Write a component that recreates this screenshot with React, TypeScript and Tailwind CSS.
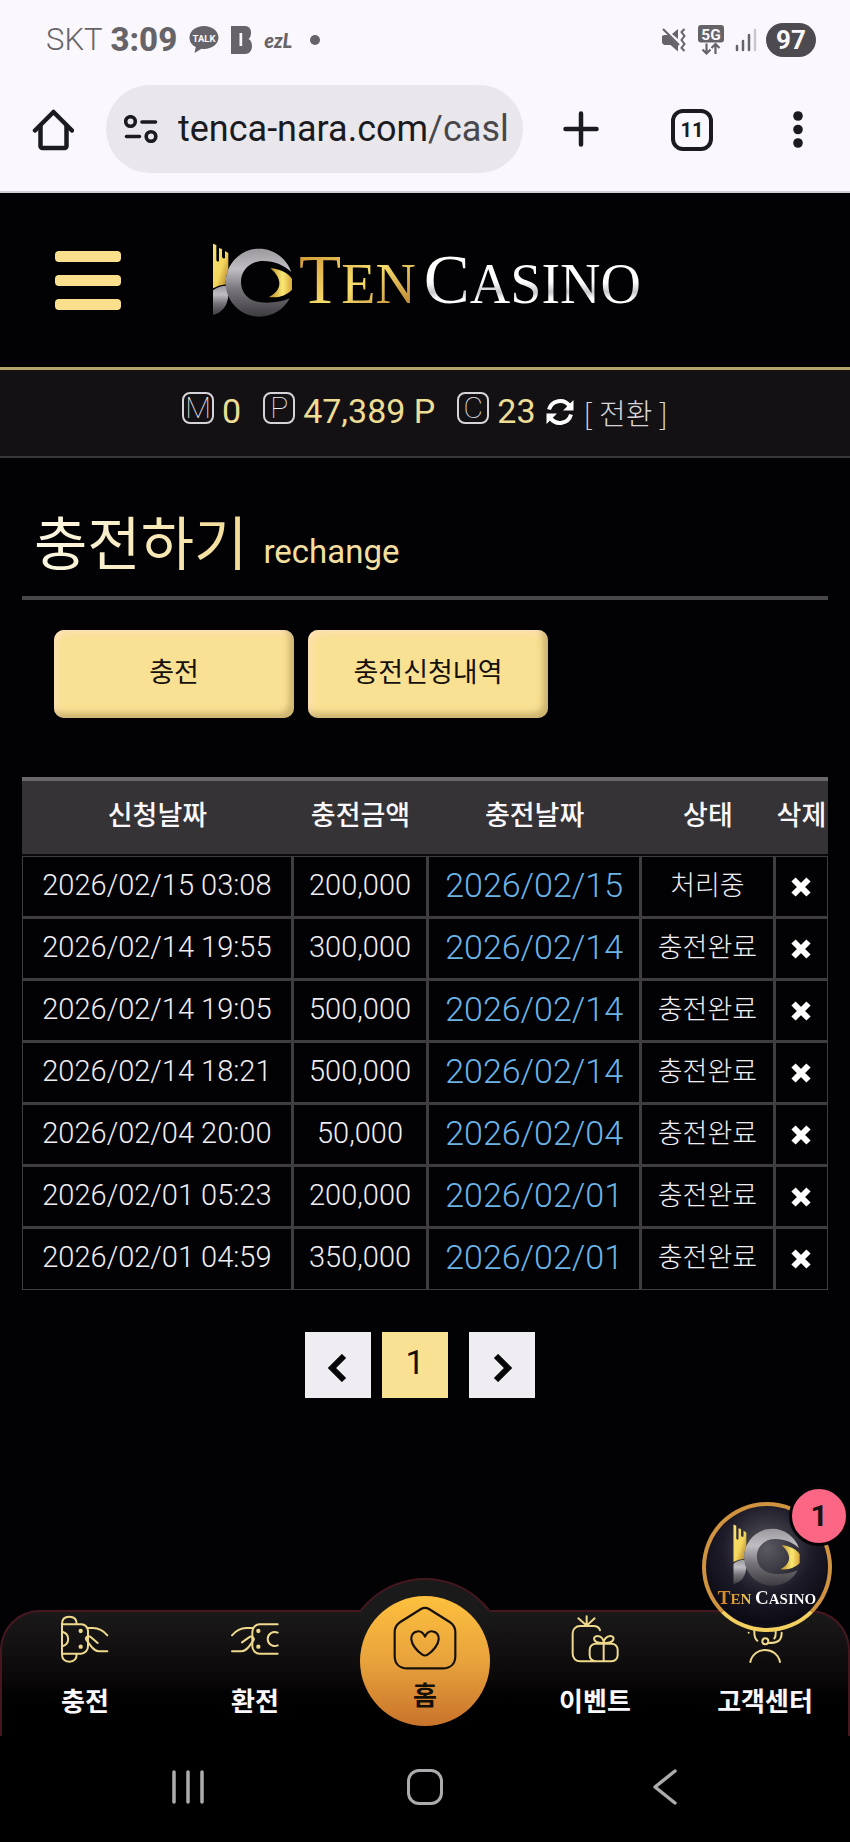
import React, { useId } from "react";

const SANS = "font-['Roboto','Noto_Sans_CJK_KR',sans-serif]";
const KR = "font-['Noto_Sans_CJK_KR',sans-serif]";

type Row = { requested: string; amount: string; charged: string; status: string };

const rows: Row[] = [
  { requested: "2026/02/15 03:08", amount: "200,000", charged: "2026/02/15", status: "처리중" },
  { requested: "2026/02/14 19:55", amount: "300,000", charged: "2026/02/14", status: "충전완료" },
  { requested: "2026/02/14 19:05", amount: "500,000", charged: "2026/02/14", status: "충전완료" },
  { requested: "2026/02/14 18:21", amount: "500,000", charged: "2026/02/14", status: "충전완료" },
  { requested: "2026/02/04 20:00", amount: "50,000", charged: "2026/02/04", status: "충전완료" },
  { requested: "2026/02/01 05:23", amount: "200,000", charged: "2026/02/01", status: "충전완료" },
  { requested: "2026/02/01 04:59", amount: "350,000", charged: "2026/02/01", status: "충전완료" },
];

function StatusBar() {
  return (
    <div className="flex h-20 items-center justify-between pl-11.5 pr-8.5 text-[#666468]">
      <div className="flex items-center">
        <span className="text-[31px] font-light leading-8">SKT</span>
        <span className="ml-2 text-[33px] font-extrabold leading-8">3:09</span>
        <div className="ml-3 flex items-center gap-3">
          <svg viewBox="0 0 30 28" className="h-7 w-7.5">
            <path
              fill="#666468"
              d="M15 0C6.900 0 .5 5 .5 11.500c0 4.200 2.500 7.700 6.300 9.600L5.500 27l7-4.200c.8.1 1.600.2 2.500.2 8 0 14.500-5 14.500-11.500S23 0 15 0z"
            />
            <text x="15" y="15.500" textAnchor="middle" fontSize="9.500" fontWeight="bold" fill="#faf8fd">
              TALK
            </text>
          </svg>
          <svg viewBox="0 0 21 28" className="h-7 w-5.25">
            <path fill="#666468" d="M0 0h14c4 0 6 3 6 6.500 0 3-.8 5.500-2.500 6.500 2.300 1 3.500 4 3.500 7 0 4.500-2.500 8-7 8H0z" />
            <path fill="#faf8fd" d="M8.500 7h2.700v13H8.500z" />
          </svg>
          <span className="font-['Lato',sans-serif] text-[20px] font-black italic leading-6">ezL</span>
        </div>
        <span className="ml-4.5 h-2.5 w-2.5 rounded-full bg-[#666468]" />
      </div>
      <div className="flex items-center">
        <svg viewBox="0 0 24 24" className="h-6 w-6" fill="none">
          <path fill="#666468" d="M0 8l2-1h4l10 10v6.500L8.500 17H2l-2-2zM10 6l6-5v10z" />
          <path stroke="#666468" strokeWidth="2.200" d="M1 1l16 16" />
          <path stroke="#666468" strokeWidth="2" d="M22.500 1l-3 3 3 4-3 4 3 4-3 4 3 3" />
        </svg>
        <svg viewBox="0 0 26 30" className="ml-3 h-7.5 w-6.5" fill="none">
          <rect width="26" height="17.500" rx="3" fill="#666468" />
          <text x="13" y="14.500" textAnchor="middle" fontSize="15.500" fontWeight="bold" fill="#faf8fd">
            5G
          </text>
          <path stroke="#666468" strokeWidth="2.200" d="M8.500 18.500v10M4.500 24.500l4 4 4-4M17.500 29v-10M13.500 23l4-4 4 4" />
        </svg>
        <svg viewBox="0 0 24 24" className="ml-2.5 h-6 w-6">
          <path stroke="#666468" strokeWidth="2.500" strokeLinecap="round" d="M3 18v4M9 13v9M15 7v15" />
          <path stroke="#c9c7cc" strokeWidth="2.500" strokeLinecap="round" d="M21 2v20" />
        </svg>
        <span className="ml-2 flex h-8.5 w-12.5 items-center justify-center rounded-full bg-[#4d4b4f] text-[26px] font-bold leading-8 text-[#faf8fd]">
          97
        </span>
      </div>
    </div>
  );
}

function BrowserBar() {
  return (
    <div className="flex h-27.75 items-start pl-8 pr-10.5 pt-1.25 text-[#1b1b1f]">
      <button type="button" aria-label="Home" className="mt-6 h-10.5 w-10.5 shrink-0">
        <svg viewBox="0 0 42 42" fill="none" stroke="currentColor" strokeWidth="4.500" strokeLinecap="round" strokeLinejoin="round">
          <path d="M3 21.500L21.500 3 40 21.500" />
          <path d="M8.500 17v20a2 2 0 0 0 2 2h22a2 2 0 0 0 2-2V17" />
        </svg>
      </button>
      <button
        type="button"
        aria-label="Address"
        className="ml-8 flex h-22 min-w-0 flex-1 items-center rounded-full bg-[#e9e7eb] pl-4.5 pr-3"
      >
        <svg viewBox="0 0 34 28" className="h-7 w-8.5 shrink-0" fill="none" stroke="currentColor" strokeWidth="3.600" strokeLinecap="round">
          <circle cx="6.500" cy="6.500" r="4.800" />
          <path d="M18 7h13.500M2.500 21.500h13" />
          <circle cx="27" cy="21.500" r="4.800" />
        </svg>
        <span className="ml-5 min-w-0 flex-1 overflow-hidden whitespace-nowrap text-left text-[36px] leading-11">
          tenca-nara.com<span className="text-[#48474b]">/casl</span>
        </span>
      </button>
      <button type="button" aria-label="New tab" className="ml-10 mt-6.5 h-9 w-9 shrink-0">
        <svg viewBox="0 0 36 36" stroke="currentColor" strokeWidth="4.500" strokeLinecap="round">
          <path d="M18 2.500v31M2.500 18h31" />
        </svg>
      </button>
      <button
        type="button"
        aria-label="Tabs"
        className="ml-18 mt-6 flex h-10.5 w-10.5 shrink-0 items-center justify-center rounded-xl border-4 border-[#1b1b1f] text-[20px] font-bold leading-5"
      >
        11
      </button>
      <button type="button" aria-label="Menu" className="ml-18.75 mt-6 h-10 w-5 shrink-0">
        <svg viewBox="0 0 20 40" fill="currentColor">
          <circle cx="10" cy="7" r="4.800" />
          <circle cx="10" cy="20.500" r="4.800" />
          <circle cx="10" cy="34" r="4.800" />
        </svg>
      </button>
    </div>
  );
}

function LogoMark({ className }: { className: string }) {
  const id = useId();
  return (
    <svg viewBox="638 160 240 222" className={className}>
      <defs>
        <linearGradient id={`${id}g`} x1="0" y1="0" x2="1" y2="1">
          <stop offset="0" stopColor="#f8e27a" />
          <stop offset=".55" stopColor="#f3d65c" />
          <stop offset="1" stopColor="#a8741f" />
        </linearGradient>
        <linearGradient id={`${id}s`} x1="0" y1="0" x2="0" y2="1">
          <stop offset="0" stopColor="#9b999e" />
          <stop offset=".3" stopColor="#c0bec2" />
          <stop offset=".6" stopColor="#77757a" />
          <stop offset="1" stopColor="#3d3b40" />
        </linearGradient>
        <linearGradient id={`${id}e`} x1="0" y1="0" x2="1" y2="0">
          <stop offset="0" stopColor="#b88a20" />
          <stop offset=".6" stopColor="#fbe774" />
          <stop offset="1" stopColor="#d9a839" />
        </linearGradient>
      </defs>
      <path
        fill={`url(#${id}g)`}
        d="M638 162l10 4v46q4 8 8 1v-38l9 3v24q5 8 9 2v-20l10 6v50q-10 22-7 44-20 2-39 12z"
      />
      <path fill={`url(#${id}s)`} d="M638 376v-74q16-14 42-14 0 14 4 30-4 46-46 58z" />
      <path
        fill={`url(#${id}s)`}
        fillRule="evenodd"
        d="M873 247C858 205 820 177 777 177c-56 0-101 46-101 102s45 102 101 102c40 0 74-22 91-55-24 11-58 15-88 12-36-4-58-30-58-62 0-34 26-62 66-62 36 0 64 14 85 33z"
      />
      <path fill={`url(#${id}e)`} d="M810 236c27 1 54 14 65 32v32c-17 18-43 26-69 22 44-22 38-58 4-86z" />
    </svg>
  );
}

function SiteHeader() {
  return (
    <header className="grid h-44.25 grid-cols-[1fr_auto_1fr] items-center border-b-3 border-[#b3a56c]">
      <button type="button" aria-label="메뉴" className="ml-13.75 flex w-16.5 flex-col gap-3.25">
        <span className="h-2.75 rounded-sm bg-[#fae08d]" />
        <span className="h-2.75 rounded-sm bg-[#fae08d]" />
        <span className="h-2.75 rounded-sm bg-[#fae08d]" />
      </button>
      <a href="#home" className="ml-1 flex items-center font-['Liberation_Serif',serif] leading-20">
        <LogoMark className="h-18.5 w-20 shrink-0" />
        <span className="ml-1.5 mt-1 bg-linear-to-br from-[#c98a2b] via-[#f7df6c] to-[#a8691d] bg-clip-text text-[56px] text-transparent">
          <span className="text-[69px]">T</span>EN
        </span>
        <span className="ml-2 mt-1 bg-linear-to-b from-white from-50% via-[#c9c7cc] via-62% to-white to-70% bg-clip-text text-[56px] text-transparent">
          <span className="text-[69px]">C</span>ASINO
        </span>
      </a>
    </header>
  );
}

function Letter({ children }: { children: string }) {
  return (
    <span className="flex h-8 w-8 items-center justify-center rounded-lg border-2 border-[#d6d4d9] text-[30px] font-thin leading-7 text-[#f0eef3]">
      {children}
    </span>
  );
}

function Balance() {
  return (
    <div className="flex h-22 items-center justify-center border-b-2 border-[#39373b] bg-[#131114] pb-2.5 text-[34px] leading-9 text-[#eedd95]">
      <Letter>M</Letter>
      <span className="ml-2 mt-1.5">0</span>
      <span className="ml-5.5 flex">
        <Letter>P</Letter>
      </span>
      <span className="ml-2 mt-1.5">47,389 P</span>
      <span className="ml-5.5 flex">
        <Letter>C</Letter>
      </span>
      <span className="ml-2 mt-1.5">23</span>
      <button type="button" className="ml-2.5 mt-2 flex items-center gap-2.5 text-[#d8d6da]">
        <svg viewBox="0 0 28 28" className="h-7 w-7" fill="none" stroke="#fff" strokeWidth="4">
          <path d="M3 11.500A11.500 11.500 0 0 1 23.500 8M25 16.500A11.500 11.500 0 0 1 4.500 20" />
          <path fill="#fff" stroke="none" d="M27.500 2v10.500H17zM.5 26V15.500H11z" />
        </svg>
        <span className="font-['Noto_Sans_CJK_KR',sans-serif] text-[29px] font-light leading-8">[ 전환 ]</span>
      </button>
    </div>
  );
}

const chargeButton =
  "h-22 w-full max-w-60 rounded-[10px] bg-[#f9e194] pb-1.5 text-[27px] text-[#15100a] shadow-[inset_-5px_-5px_6px_rgba(120,95,40,0.35),inset_3px_3px_6px_rgba(255,225,190,0.9)]";

function History() {
  const cell =
    "border border-b-2 border-r-2 border-[#3f3d41] p-0 text-center align-middle last:border-r group-last:border-b";
  return (
    <table className="mt-14.75 w-full table-fixed border-separate border-spacing-0">
      <colgroup>
        <col className="w-[33.6%]" />
        <col className="w-[16.8%]" />
        <col className="w-[26.4%]" />
        <col className="w-[16.6%]" />
        <col className="w-[6.6%]" />
      </colgroup>
      <thead>
        <tr className={`${KR} h-19.75 bg-[#353336] text-[27px] leading-8 text-[#faf8fd]`}>
          {["신청날짜", "충전금액", "충전날짜", "상태", "삭제"].map((h) => (
            <th key={h} className="whitespace-nowrap border-b-2 border-t-4 border-b-[#0a090b] border-t-[#69676b] p-0 pb-2 font-medium">
              {h}
            </th>
          ))}
        </tr>
      </thead>
      <tbody className="text-[29px] font-light leading-8 text-[#f0eef2]">
        {rows.map((r) => (
          <tr key={r.requested} className="group h-15.5">
            <td className={`${cell} pb-1`}>{r.requested}</td>
            <td className={`${cell} pb-1`}>{r.amount}</td>
            <td className={`${cell} pb-1 text-[34px] text-[#6bb3e6]`}>{r.charged}</td>
            <td className={`${cell} ${KR} pb-1.5 text-[27px]`}>{r.status}</td>
            <td className={cell}>
              <button type="button" aria-label="삭제" className="block w-full">
                <svg viewBox="0 0 20 20" className="mx-auto h-5 w-5">
                  <path stroke="#fff" strokeWidth="6" d="M2.500 2.500l15 15M17.500 2.500l-15 15" />
                </svg>
              </button>
            </td>
          </tr>
        ))}
      </tbody>
    </table>
  );
}

function Pagination() {
  return (
    <nav aria-label="페이지" className="mr-2.5 mt-10.5 flex justify-center">
      <button type="button" aria-label="이전" className="flex h-16.5 w-16.5 items-center justify-center bg-[#efedf1]">
        <svg viewBox="0 0 28 28" className="mt-1.5 h-7 w-7" fill="none" stroke="#050406" strokeWidth="6">
          <path d="M20 2L8 14l12 12" />
        </svg>
      </button>
      <button type="button" className="ml-2.75 h-16.5 w-16.5 bg-[#f9e194] pb-1.5 text-[34px] leading-10 text-[#15100a]">
        1
      </button>
      <button type="button" aria-label="다음" className="ml-5.25 flex h-16.5 w-16.5 items-center justify-center bg-[#efedf1]">
        <svg viewBox="0 0 28 28" className="mt-1.5 h-7 w-7" fill="none" stroke="#050406" strokeWidth="6">
          <path d="M8 2l12 12L8 26" />
        </svg>
      </button>
    </nav>
  );
}

const icon = {
  fill: "none",
  stroke: "#efd98c",
  strokeWidth: 6,
  strokeLinecap: "round" as const,
  strokeLinejoin: "round" as const,
};

function NavItem({ label, children }: { label: string; children: React.ReactNode }) {
  return (
    <a href="#menu" className="flex flex-col items-center pt-1.25">
      {children}
      <span className="mt-4.75 whitespace-nowrap text-[26px] font-bold leading-9">{label}</span>
    </a>
  );
}

function BottomNav() {
  return (
    <div className="relative mt-auto">
      <div className="absolute -top-8 left-1/2 h-41 w-41 -translate-x-1/2 rounded-full border-2 border-[#451820] bg-[#1b1a1b]" />
      <nav
        className={`${KR} relative grid h-31.5 grid-cols-5 rounded-t-[40px] bg-linear-to-b from-[#1b1a1a] via-[#0b0809] via-55% to-black to-90% text-[#faf8fd]`}
      >
        <div className="pointer-events-none absolute inset-0 rounded-t-[40px] border-2 border-b-0 border-[#451820]" />
        <div className="absolute left-1/2 top-0 h-10 w-32 -translate-x-1/2 bg-linear-to-b from-[#1b1a1b] to-[#131112]" />
        <NavItem label="충전">
          <svg viewBox="184 166 144 144" className="h-12 w-12" {...icon}>
            <path d="M231 192c0-14-8-21-22-21s-22 7-22 21v92c0 14 8 22 22 22s22-8 22-22" />
            <path d="M187 194h58a20 20 0 0 1 20 20v46a22 22 0 0 1-20 22h-58M190 217a22 22 0 0 1 0 42" />
            <path d="M262 205h18c18 0 32 9 43 22M323 275h-23c-14 0-20-8-27-17l-12-16c-6-8 4-17 13-9l20 17" />
            <circle cx="243" cy="214" r="3.500" fill="#efd98c" />
            <circle cx="243" cy="261" r="3.500" fill="#efd98c" />
          </svg>
        </NavItem>
        <NavItem label="환전">
          <svg viewBox="694 166 144 144" className="h-12 w-12" {...icon}>
            <path d="M834 194h-54a22 22 0 0 0-22 22v44a22 22 0 0 0 22 22h54M834 219a21 21 0 1 0 0 38" />
            <path d="M758 205h-18c-18 0-32 9-43 22M697 275h26c14 0 20-8 27-17l11-15c5-8-5-16-13-10l-21 15" />
            <circle cx="776" cy="214" r="3.500" fill="#efd98c" />
            <circle cx="776" cy="261" r="3.500" fill="#efd98c" />
          </svg>
        </NavItem>
        <div className="flex justify-center">
          <a
            href="#home"
            className="relative -mt-3.5 flex h-32.5 w-32.5 shrink-0 flex-col items-center rounded-full bg-linear-to-b from-[#fdc03e] via-[#e8a33c] to-[#c9732b] pt-2.5 text-[#15100a]"
          >
            <svg viewBox="189 137 192 192" className="h-16 w-16" fill="none" stroke="#15100a" strokeWidth="6.500" strokeLinejoin="round">
              <path d="M273 146q12-7 24 0l62 39q17 11 17 31v70c0 24-14 38-38 38H232c-24 0-38-14-38-38v-70q0-20 17-31z" />
              <path d="M285 229c-5-12-14-17-23-16-12 1-19 12-18 24 1 15 16 35 33 46q8 5 16 0c17-11 32-31 33-46 1-12-6-23-18-24-9-1-18 4-23 16z" />
            </svg>
            <span className="mt-2 text-[26px] font-bold leading-8">홈</span>
          </a>
        </div>
        <NavItem label="이벤트">
          <svg viewBox="723 166 144 144" className="h-12 w-12" {...icon}>
            <path d="M810 212c-2-8-9-13-20-13h-40a22 22 0 0 0-22 22v62a22 22 0 0 0 22 22h95a18 18 0 0 0 18-18v-17a18 18 0 0 0-18-18h-48a18 18 0 0 0-18 18v17a18 18 0 0 0 18 18M821 252v53" />
            <path d="M821 250c-34 2-35-21-18-21 12 0 18 11 18 21 0-10 8-21 20-21 16 0 14 23-20 21M770 197v-27M768 196l-23-20M772 196l22-20" />
          </svg>
        </NavItem>
        <NavItem label="고객센터">
          <svg viewBox="243 434 144 144" className="h-12 w-12" {...icon}>
            <path d="M271 575c10-48 79-48 89 0M283 487q0 16 9 24M365 487c0 24-12 31-38 31M347 490q0 8-4 14M266 487v0M283 487v-20c0-24 64-24 64 0v20" />
            <circle cx="316" cy="513" r="9" />
          </svg>
        </NavItem>
      </nav>
      <button
        type="button"
        aria-label="TEN CASINO 상담"
        className="absolute -top-27 right-4.5 h-32.5 w-32.5 rounded-full border-4 border-[#d09340] border-b-[#f3cf60] bg-[radial-gradient(circle_at_50%_35%,#5b5960_0%,#1d1b28_45%,#0c0a14_75%,#2a272c_100%)]"
      >
        <span className="flex flex-col items-center font-['Liberation_Serif',serif] text-[15px] font-bold leading-6">
          <LogoMark className="h-15.5 w-18" />
          <span className="whitespace-nowrap bg-linear-to-r from-[#d68c2b] from-10% via-[#f1d25c] via-34% to-white to-35% bg-clip-text text-transparent">
            <span className="text-[19px]">T</span>EN <span className="text-[19px]">C</span>ASINO
          </span>
        </span>
        <span className="absolute -right-5.25 -top-5 flex h-15 w-15 items-center justify-center rounded-full border-3 border-[#050407] bg-[#fc6685] text-[30px] font-bold leading-8 text-[#1b1215]">
          1
        </span>
      </button>
    </div>
  );
}

function SystemNav() {
  return (
    <div className="relative grid h-26.5 grid-cols-[1fr_auto_1fr] items-center bg-black pb-1 text-[#adabae]">
      <button type="button" aria-label="Recents" className="mr-8 h-9 w-9 justify-self-center">
        <svg viewBox="0 0 36 36" stroke="currentColor" strokeWidth="3.500" strokeLinecap="round">
          <path d="M4 3v30M18 3v30M32 3v30" />
        </svg>
      </button>
      <button type="button" aria-label="Home" className="h-9 w-9 rounded-xl border-3 border-[#adabae]" />
      <button type="button" aria-label="Back" className="ml-9 h-9 w-9 justify-self-center">
        <svg viewBox="0 0 36 36" fill="none" stroke="currentColor" strokeWidth="3.500" strokeLinecap="round" strokeLinejoin="round">
          <path d="M28 2L8 18l20 16" />
        </svg>
      </button>
    </div>
  );
}

export default function App() {
  return (
    <div className={`${SANS} flex min-h-screen flex-col bg-[#020104]`}>
      <div className="border-b-2 border-[#cfd1d6] bg-[#faf8fd]">
        <StatusBar />
        <BrowserBar />
      </div>
      <SiteHeader />
      <Balance />
      <main className="px-5.5 pb-10">
        <div className="flex h-35.5 items-end border-b-4 border-[#48464a] pb-5 pl-3">
          <h1 className={`${KR} bg-linear-to-r from-[#fdf9e6] to-[#f3dc93] bg-clip-text text-[58px] leading-18 text-transparent`}>
            충전하기
          </h1>
          <span className="ml-4 pb-1.5 text-[33px] leading-9 text-[#f3dfa0]">rechange</span>
        </div>
        <div className="mt-7.5 flex gap-3.5 px-8">
          <button type="button" className={`${chargeButton} ${KR}`}>충전</button>
          <button type="button" className={`${chargeButton} ${KR}`}>충전신청내역</button>
        </div>
        <History />
        <Pagination />
      </main>
      <BottomNav />
      <SystemNav />
    </div>
  );
}
